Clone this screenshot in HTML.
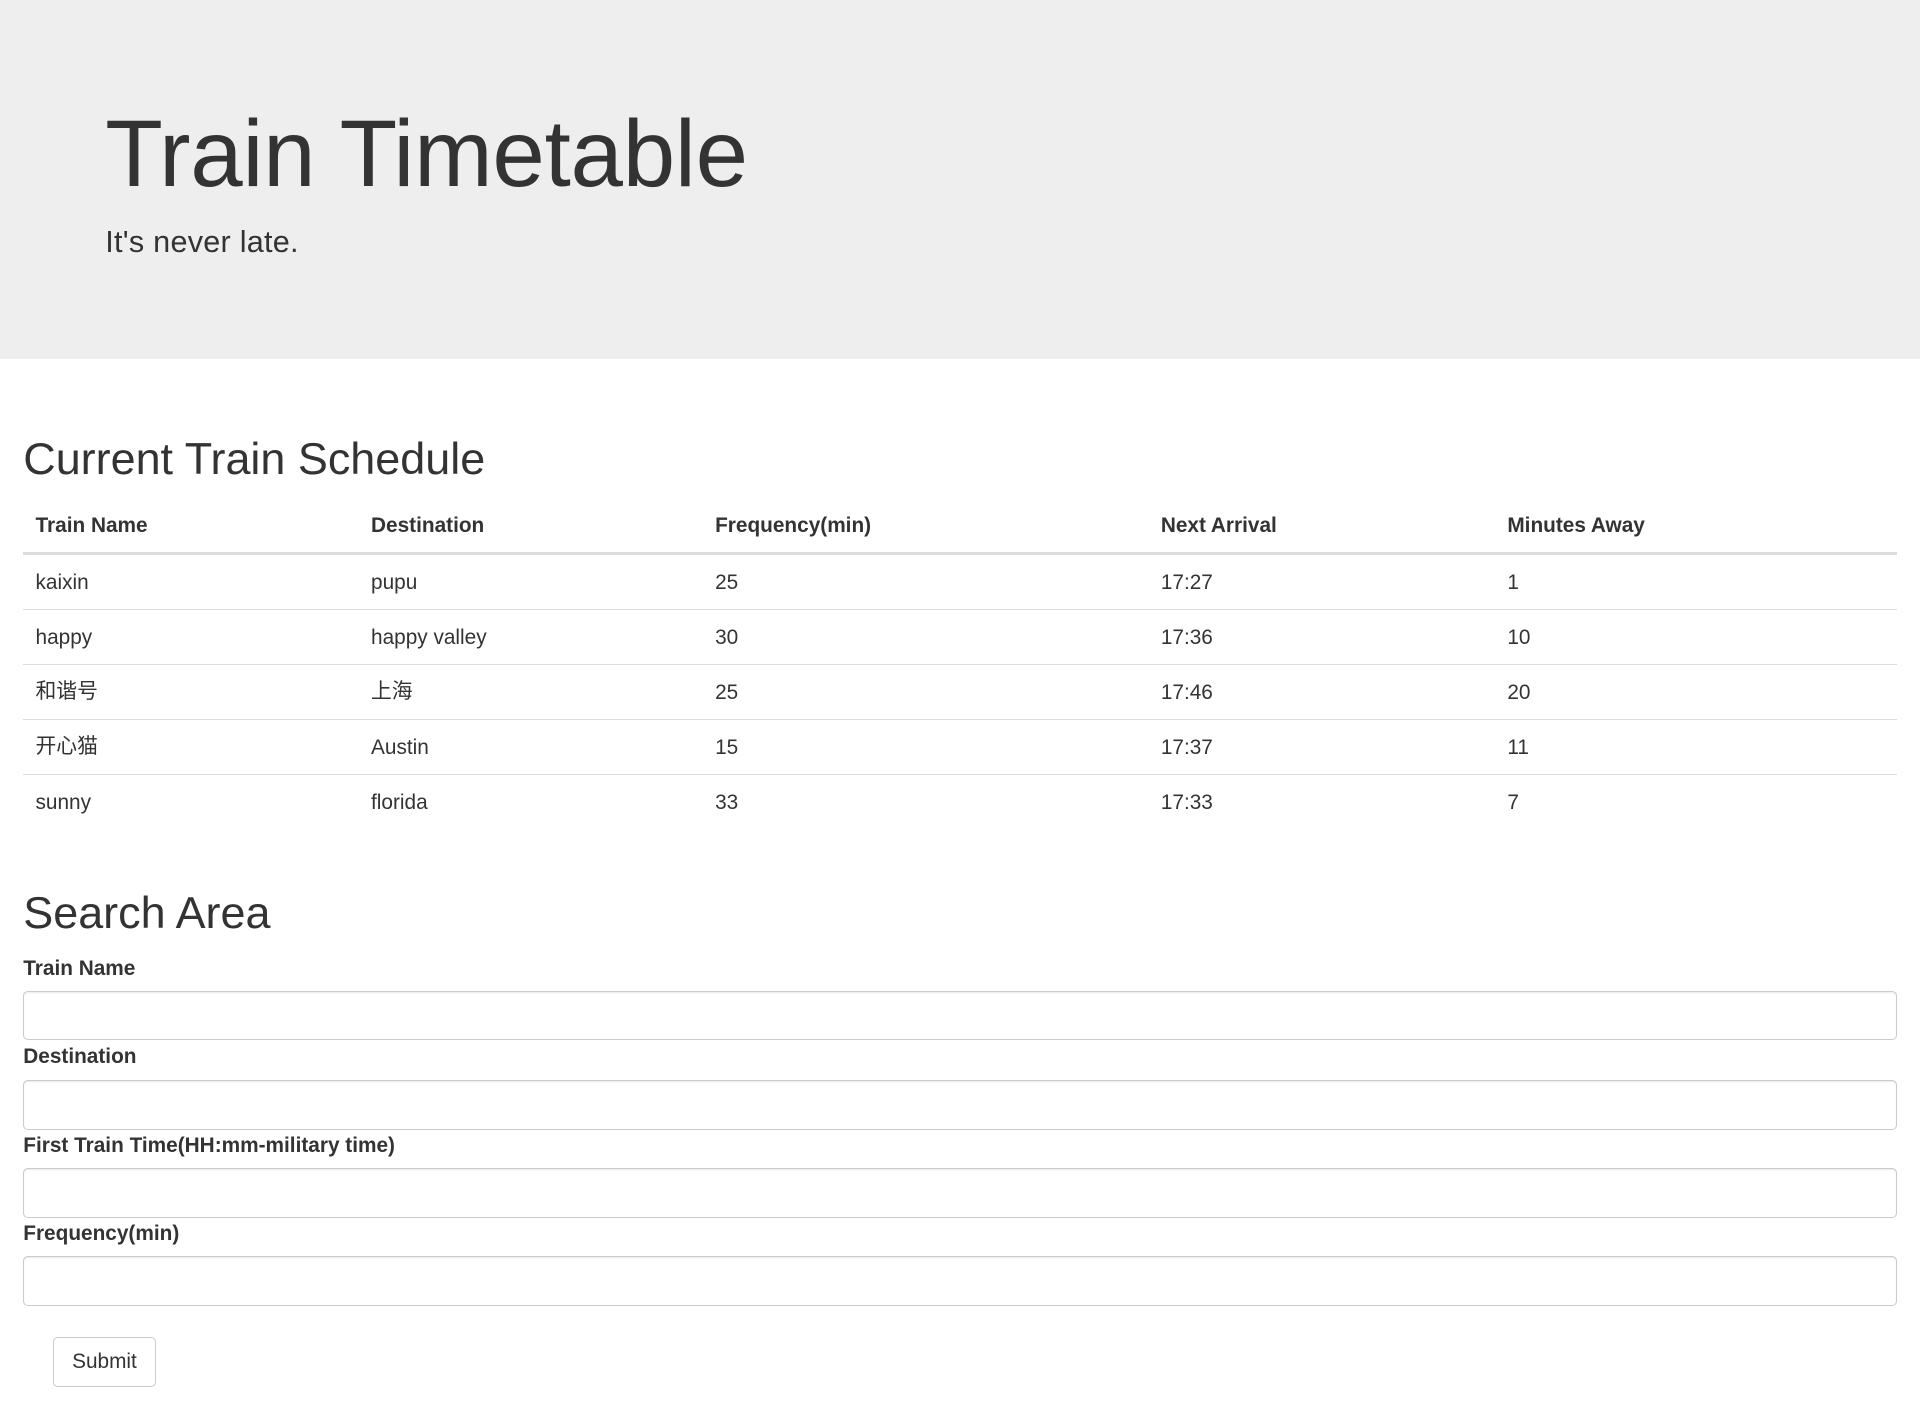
<!DOCTYPE html>
<html><head><meta charset="utf-8">
<style>
html{zoom:1.22449}
body{margin:0;width:1568px;height:1157px;position:relative;font-family:"Liberation Sans","Noto Sans CJK SC",sans-serif;color:#333;background:#fff;overflow:hidden}
.jumbo{position:absolute;left:0;top:0;width:1568px;height:293px;background:#eee}
.abs{position:absolute;white-space:nowrap;line-height:1}
h1{position:absolute;margin:0;left:86px;top:87px;font-size:77px;font-weight:normal;line-height:1;letter-spacing:-0.2px}
.sub{left:86px;top:185px;font-size:25px;letter-spacing:0.2px}
h2{position:absolute;margin:0;left:19px;font-size:36.7px;font-weight:normal;line-height:1}
.th{font-weight:bold;font-size:17px}
.td{font-size:17px}
.line{position:absolute;left:19px;width:1530px;height:1px;background:#ddd}
.lbl{position:absolute;left:19px;font-weight:bold;font-size:17px;line-height:1}
.inp{position:absolute;left:19px;width:1529px;height:39px;border:1px solid #ccc;border-radius:4px;box-shadow:inset 0 1px 1px rgba(0,0,0,.075)}
.btn{position:absolute;left:43px;top:1092px;width:83px;height:39px;border:1px solid #ccc;border-radius:4px;font-size:17px;line-height:40px;text-align:center}
</style></head><body>
<div class="jumbo"></div>
<h1>Train Timetable</h1>
<div class="abs sub">It's never late.</div>

<h2 style="top:357px">Current Train Schedule</h2>
<div class="abs th" style="left:29px;top:421px">Train Name</div>
<div class="abs th" style="left:303px;top:421px">Destination</div>
<div class="abs th" style="left:584px;top:421px">Frequency(min)</div>
<div class="abs th" style="left:948px;top:421px">Next Arrival</div>
<div class="abs th" style="left:1231px;top:421px">Minutes Away</div>
<div class="line" style="top:451px;height:2px"></div>

<div class="abs td" style="left:29px;top:468px">kaixin</div>
<div class="abs td" style="left:303px;top:468px">pupu</div>
<div class="abs td" style="left:584px;top:468px">25</div>
<div class="abs td" style="left:948px;top:468px">17:27</div>
<div class="abs td" style="left:1231px;top:468px">1</div>
<div class="line" style="top:497px"></div>

<div class="abs td" style="left:29px;top:513px">happy</div>
<div class="abs td" style="left:303px;top:513px">happy valley</div>
<div class="abs td" style="left:584px;top:513px">30</div>
<div class="abs td" style="left:948px;top:513px">17:36</div>
<div class="abs td" style="left:1231px;top:513px">10</div>
<div class="line" style="top:542px"></div>

<div class="abs td" style="left:29px;top:557px">和谐号</div>
<div class="abs td" style="left:303px;top:557px">上海</div>
<div class="abs td" style="left:584px;top:558px">25</div>
<div class="abs td" style="left:948px;top:558px">17:46</div>
<div class="abs td" style="left:1231px;top:558px">20</div>
<div class="line" style="top:587px"></div>

<div class="abs td" style="left:29px;top:602px">开心猫</div>
<div class="abs td" style="left:303px;top:603px">Austin</div>
<div class="abs td" style="left:584px;top:603px">15</div>
<div class="abs td" style="left:948px;top:603px">17:37</div>
<div class="abs td" style="left:1231px;top:603px">11</div>
<div class="line" style="top:632px"></div>

<div class="abs td" style="left:29px;top:648px">sunny</div>
<div class="abs td" style="left:303px;top:648px">florida</div>
<div class="abs td" style="left:584px;top:648px">33</div>
<div class="abs td" style="left:948px;top:648px">17:33</div>
<div class="abs td" style="left:1231px;top:648px">7</div>

<h2 style="top:728px">Search Area</h2>
<div class="lbl" style="top:783px">Train Name</div>
<div class="inp" style="top:809px"></div>
<div class="lbl" style="top:855px">Destination</div>
<div class="inp" style="top:882px"></div>
<div class="lbl" style="top:928px">First Train Time(HH:mm-military time)</div>
<div class="inp" style="top:954px"></div>
<div class="lbl" style="top:1000px">Frequency(min)</div>
<div class="inp" style="top:1026px"></div>
<div class="btn">Submit</div>
</body></html>
